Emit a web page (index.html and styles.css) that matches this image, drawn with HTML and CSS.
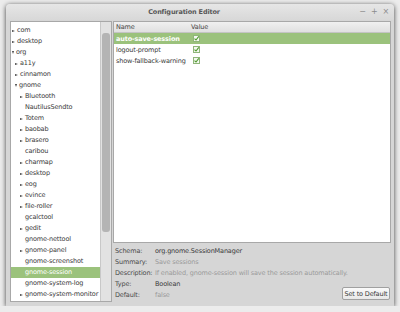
FILE: index.html
```html
<!DOCTYPE html>
<html lang="en">
<head>
  <meta charset="UTF-8" />
  <title>Configuration Editor</title>
  <link rel="stylesheet" href="styles.css">
</head>
<body>
  <div class="window">
    <div class="titlebar">
      <span class="title">Configuration Editor</span>
      <div class="controls"><span>&minus;</span><span>+</span><span>&times;</span></div>
    </div>
    <div class="content">
      <div class="tree">
        <div class="tree-rows">
          <div class="row l0"><span class="arrow"></span>com</div>
          <div class="row l0"><span class="arrow"></span>desktop</div>
          <div class="row l0"><span class="arrow down"></span>org</div>
          <div class="row l1"><span class="arrow"></span>a11y</div>
          <div class="row l1"><span class="arrow"></span>cinnamon</div>
          <div class="row l1"><span class="arrow down"></span>gnome</div>
          <div class="row l2"><span class="arrow"></span>Bluetooth</div>
          <div class="row l2"><span class="arrow none"></span>NautilusSendto</div>
          <div class="row l2"><span class="arrow"></span>Totem</div>
          <div class="row l2"><span class="arrow"></span>baobab</div>
          <div class="row l2"><span class="arrow"></span>brasero</div>
          <div class="row l2"><span class="arrow none"></span>caribou</div>
          <div class="row l2"><span class="arrow"></span>charmap</div>
          <div class="row l2"><span class="arrow"></span>desktop</div>
          <div class="row l2"><span class="arrow"></span>eog</div>
          <div class="row l2"><span class="arrow"></span>evince</div>
          <div class="row l2"><span class="arrow"></span>file-roller</div>
          <div class="row l2"><span class="arrow none"></span>gcalctool</div>
          <div class="row l2"><span class="arrow"></span>gedit</div>
          <div class="row l2"><span class="arrow none"></span>gnome-nettool</div>
          <div class="row l2"><span class="arrow"></span>gnome-panel</div>
          <div class="row l2"><span class="arrow none"></span>gnome-screenshot</div>
          <div class="row l2 selected"><span class="arrow none"></span>gnome-session</div>
          <div class="row l2"><span class="arrow none"></span>gnome-system-log</div>
          <div class="row l2"><span class="arrow"></span>gnome-system-monitor</div>
        </div>
        <div class="scrollbar"><div class="thumb"></div></div>
      </div>
      <div class="right">
        <div class="list">
          <div class="list-head">
            <span class="col-name">Name</span>
            <span class="col-value">Value</span>
          </div>
          <div class="list-row selected">
            <span class="col-name">auto-save-session</span>
            <span class="col-value"><svg class="check" width="7" height="7" viewBox="0 0 7 7"><rect x="0.5" y="0.5" width="6" height="6" fill="#f4f8f0" stroke="#8fb57a"/><path d="M1.5 3.6 L3 5 L5.8 1.4" fill="none" stroke="#4f9a2e" stroke-width="1.1"/></svg></span>
          </div>
          <div class="list-row">
            <span class="col-name">logout-prompt</span>
            <span class="col-value"><svg class="check" width="7" height="7" viewBox="0 0 7 7"><rect x="0.5" y="0.5" width="6" height="6" fill="#f4f8f0" stroke="#8fb57a"/><path d="M1.5 3.6 L3 5 L5.8 1.4" fill="none" stroke="#4f9a2e" stroke-width="1.1"/></svg></span>
          </div>
          <div class="list-row">
            <span class="col-name">show-fallback-warning</span>
            <span class="col-value"><svg class="check" width="7" height="7" viewBox="0 0 7 7"><rect x="0.5" y="0.5" width="6" height="6" fill="#f4f8f0" stroke="#8fb57a"/><path d="M1.5 3.6 L3 5 L5.8 1.4" fill="none" stroke="#4f9a2e" stroke-width="1.1"/></svg></span>
          </div>
        </div>
        <div class="details">
          <div class="detail"><span class="label">Schema:</span><span class="value">org.gnome.SessionManager</span></div>
          <div class="detail"><span class="label">Summary:</span><span class="value dim">Save sessions</span></div>
          <div class="detail"><span class="label">Description:</span><span class="value dim">If enabled, gnome-session will save the session automatically.</span></div>
          <div class="detail"><span class="label">Type:</span><span class="value">Boolean</span></div>
          <div class="detail last">
            <span class="label">Default:</span><span class="value dim">false</span>
            <button class="reset">Set to Default</button>
          </div>
        </div>
      </div>
    </div>
  </div>
</body>
</html>
```

FILE: styles.css
```css
body {
  margin: 0;
  background: #ececec;
  font-family: "DejaVu Sans", sans-serif;
  font-size: 6.5px;
  letter-spacing: -0.15px;
  color: #3a3a3a;
  padding: 4px 6px 0 6px;
}

.window {
  width: 388px;
  height: 302px;
  background: #d6d6d6;
  border-radius: 4px 4px 0 0;
  box-shadow: 0 1px 5px rgba(0, 0, 0, 0.75);
  display: flex;
  flex-direction: column;
}

.titlebar {
  height: 16px;
  position: relative;
  display: flex;
  align-items: center;
  justify-content: center;
  padding-right: 32px;
  background: linear-gradient(#e6e6e6, #d8d8d8);
  border-radius: 4px 4px 0 0;
}

.title {
  font-weight: bold;
  color: #585858;
  font-size: 6.5px;
}

.controls {
  position: absolute;
  right: 5px;
  top: 3px;
  display: flex;
  gap: 5px;
  color: #8c8c8c;
  font-size: 8px;
}

.content {
  flex: 1;
  display: flex;
  padding: 1px 3px 4px 4px;
  gap: 1px;
}

.tree {
  width: 100px;
  background: #fff;
  border: 1px solid #a8a8a8;
  display: flex;
}

.tree-rows {
  flex: 1;
  padding-top: 3px;
}

.row {
  height: 11px;
  line-height: 11px;
  white-space: nowrap;
  display: flex;
  align-items: center;
}

.row.l0 { padding-left: 1px; }
.row.l1 { padding-left: 4px; }
.row.l2 { padding-left: 9px; }

.row.selected {
  background: #9bc27c;
  color: #fff;
}

.arrow {
  width: 0;
  height: 0;
  border-left: 3px solid #444;
  border-top: 1.5px solid transparent;
  border-bottom: 1.5px solid transparent;
  margin-right: 2px;
}

.arrow.down {
  border-left: 1.5px solid transparent;
  border-right: 1.5px solid transparent;
  border-top: 3px solid #444;
  border-bottom: 0;
}

.arrow.none {
  border-color: transparent;
}

.scrollbar {
  width: 8px;
  background: #e2e2e2;
  border-left: 1px solid #c8c8c8;
  padding: 11px 1px 0 1px;
}

.thumb {
  height: 199px;
  background: #b4b4b4;
  border-radius: 3px;
}

.right {
  flex: 1;
  display: flex;
  flex-direction: column;
}

.list {
  height: 220px;
  background: #fff;
  border: 1px solid #a8a8a8;
}

.list-head {
  height: 10px;
  display: flex;
  align-items: center;
  background: linear-gradient(#f0f0f0, #e0e0e0);
  border-bottom: 1px solid #c4c4c4;
  color: #444;
}

.list-row {
  height: 11px;
  display: flex;
  align-items: center;
}

.list-row.selected {
  background: #9bc27c;
  color: #fff;
  font-weight: bold;
}

.col-name {
  width: 75px;
  padding-left: 2px;
  white-space: nowrap;
}

.col-value {
  display: flex;
  align-items: center;
}

.check {
  display: block;
  margin-left: 2px;
}

.details {
  padding: 2px 0 0 2px;
}

.detail {
  height: 11px;
  display: flex;
  align-items: center;
  white-space: nowrap;
}

.label {
  width: 40px;
  color: #4a4a4a;
}

.value {
  color: #3a3a3a;
}

.value.dim {
  color: #9a9a9a;
}

.detail.last {
  position: relative;
}

.reset {
  position: absolute;
  right: 1px;
  top: -2px;
  height: 13px;
  width: 48px;
  padding: 0;
  font-family: "DejaVu Sans", sans-serif;
  font-size: 6.5px;
  letter-spacing: -0.15px;
  color: #3a3a3a;
  background: linear-gradient(#fafafa, #e8e8e8);
  border: 1px solid #a0a0a0;
  border-radius: 2px;
}
```
